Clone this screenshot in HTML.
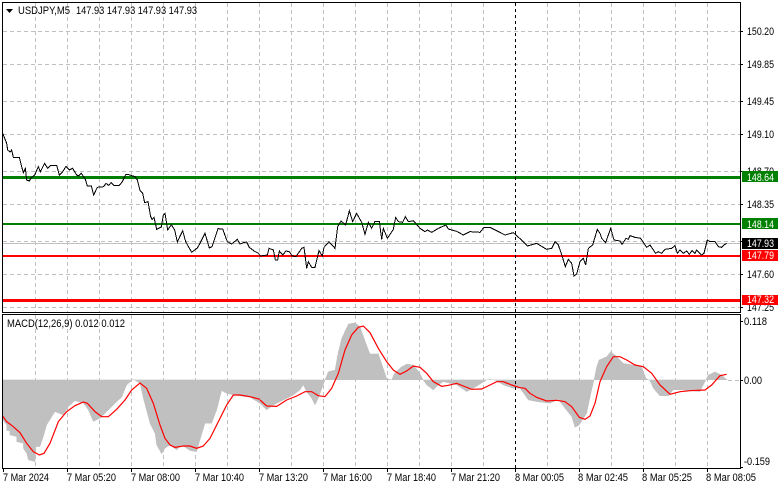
<!DOCTYPE html>
<html>
<head>
<meta charset="utf-8">
<style>
html,body{margin:0;padding:0;background:#fff;width:781px;height:489px;overflow:hidden}
svg{display:block}
text{font-family:"Liberation Sans",sans-serif;font-size:11px;fill:#000}
.g{stroke:#c0c0c0;stroke-width:1;stroke-dasharray:4 3;fill:none}
.f{stroke:#000;stroke-width:1;fill:none}
.p{fill:none;stroke:#000;stroke-width:3;shape-rendering:crispEdges}
.r{fill:none;stroke:#f00;stroke-width:3.6}
.h{fill:#c0c0c0;stroke:#c0c0c0;stroke-width:1;shape-rendering:crispEdges}
.w{fill:#fff}
</style>
</head>
<body>
<svg width="781" height="489" viewBox="0 0 781 489" xmlns="http://www.w3.org/2000/svg">
<rect width="781" height="489" fill="#fff"/>

<g class="g" shape-rendering="crispEdges">
<path d="M3 31.5H740M3 64.5H740M3 101.5H740M3 134.5H740M3 171.5H740M3 204.5H740M3 241.5H740M3 274.5H740M3 307.5H740"/>
<path d="M35.5 3V312M67.5 3V312M99.5 3V312M131.5 3V312M163.5 3V312M195.5 3V312M227.5 3V312M259.5 3V312M291.5 3V312M323.5 3V312M355.5 3V312M387.5 3V312M419.5 3V312M451.5 3V312M483.5 3V312M547.5 3V312M579.5 3V312M611.5 3V312M643.5 3V312M675.5 3V312M707.5 3V312"/>
<path d="M35.5 315V468M67.5 315V468M99.5 315V468M131.5 315V468M163.5 315V468M195.5 315V468M227.5 315V468M259.5 315V468M291.5 315V468M323.5 315V468M355.5 315V468M387.5 315V468M419.5 315V468M451.5 315V468M483.5 315V468M547.5 315V468M579.5 315V468M611.5 315V468M643.5 315V468M675.5 315V468M707.5 315V468"/>
<path d="M728 380.5H740"/>
</g>

<path d="M3 243.5H740" stroke="#c0c0c0" stroke-width="1" shape-rendering="crispEdges"/>

<!-- level lines -->
<rect x="3" y="176" width="738" height="3" fill="#008000"/>
<rect x="3" y="223" width="738" height="2" fill="#008000"/>
<rect x="3" y="255" width="738" height="2" fill="#f00"/>
<rect x="3" y="299" width="738" height="3" fill="#f00"/>

<!-- price line -->
<g transform="translate(0,130) scale(.33333)">
<polyline class="p" points="8,10 14,25 20,40 23,60 30,66 35,60 40,82 58,82 65,110 70,128 76,115 80,150 88,153 92,145 104,135 115,110 121,125 134,100 143,115 152,106 170,106 178,135 188,125 198,109 208,120 218,115 230,135 236,138 244,130 256,148 262,168 274,168 281,195 292,172 311,170 318,160 326,166 333,158 342,166 358,166 367,155 377,134 386,134 405,140 412,150 420,182 428,190 434,218 444,215 452,260 456,268 462,262 470,298 484,291 490,255 495,250 503,300 514,284 524,300 532,336 548,302 557,335 575,367 592,354 600,340 615,310 628,354 636,350 654,296 668,297 682,335 695,342 712,328 720,342 730,338 740,336 748,352 764,364 776,370 780,378"/>
</g>
<g transform="translate(260,190) scale(.33333)">
<polyline class="p" points="0,198 22,195 27,175 40,180 46,210 53,210 58,183 68,195 78,183 88,185 97,198 108,200 125,175 132,172 140,235 145,215 155,232 165,232 177,182 187,198 192,172 207,155 225,175 233,110 243,93 257,105 268,62 278,95 290,70 305,97 315,133 325,97 335,115 345,94 358,94 365,148 370,115 382,145 400,118 407,82 415,95 428,97 436,80 445,95 460,92 480,115 495,125 502,120 515,127 535,115 558,105 565,117 590,124 610,135 630,125 660,127 672,112 690,112 710,122 735,135 760,128 780,146"/>
</g>
<g transform="translate(520,150) scale(.33333)">
<polyline class="p" points="0,265 15,280 22,288 50,280 80,298 95,295 105,275 115,285 127,320 136,350 145,328 155,340 162,378 170,372 180,335 190,325 197,345 205,295 218,285 232,238 240,250 245,265 257,278 272,235 282,270 300,273 306,283 318,265 325,268 330,257 345,262 362,265 380,292 390,285 407,310 415,305 425,310 435,298 455,295 465,287 472,310 480,300 490,310 500,303 508,313 516,302 525,310 530,300 545,315 552,310 562,270 570,275 585,275 595,290 605,292 612,285 620,280"/>
</g>

<!-- histogram -->
<g transform="translate(0,310) scale(.33333)">
<polygon class="h" points="8,210 8,330 20,345 20,362 30,362 30,375 50,380 50,395 70,400 70,415 80,430 85,450 105,455 108,410 120,410 130,380 140,345 165,305 190,315 205,290 225,272 250,280 265,300 280,335 300,325 320,305 345,280 365,262 380,225 400,208 420,220 430,265 450,340 465,370 470,405 485,432 495,415 510,405 530,420 545,405 570,422 590,425 600,390 615,340 635,340 650,300 665,242 680,250 700,255 750,262 780,280 780,210"/>
<polyline class="r" points="8,318 20,335 40,350 60,368 80,400 100,425 118,435 132,430 150,400 175,335 200,305 225,287 250,276 262,280 285,305 305,320 325,320 350,298 375,270 395,240 420,219 440,235 460,280 480,345 495,385 510,405 525,412 550,408 570,408 590,415 610,408 630,385 650,345 680,285 700,255 720,255 750,260 780,268"/>
</g>
<g transform="translate(260,310) scale(.33333)">
<polygon class="h" points="0,210 0,280 20,300 40,285 60,275 80,265 100,255 120,240 130,225 140,245 155,265 165,285 175,265 195,210 205,185 225,180 235,125 245,85 265,42 285,38 300,50 318,100 330,132 355,132 370,175 380,205 395,210 403,190 425,170 440,162 460,165 480,190 490,210 500,225 520,240 535,225 550,215 590,225 620,245 640,235 680,210 690,208 710,212 730,225 760,235 780,235 780,210"/>
<polyline class="r" points="0,270 20,288 50,289 80,270 110,258 135,245 155,245 175,257 195,260 215,235 235,190 255,120 275,75 295,52 310,48 330,68 355,115 380,155 400,180 420,193 440,183 460,168 480,172 500,190 520,215 545,229 565,226 590,220 610,228 635,238 665,237 690,225 710,215 730,215 755,225 780,233"/>
</g>
<g transform="translate(520,310) scale(.33333)">
<polygon class="h" points="0,210 0,235 25,270 50,275 90,280 115,268 135,295 155,320 165,352 178,345 200,310 215,240 222,210 230,170 237,150 260,140 272,125 285,135 310,160 340,165 365,170 378,205 390,212 400,235 420,258 445,258 460,240 490,240 540,245 555,215 565,195 585,185 605,195 622,210"/>
<polyline class="r" points="0,233 15,235 30,250 50,262 80,273 110,271 135,275 155,290 178,322 195,328 210,318 225,280 240,215 260,170 280,140 300,140 320,150 345,165 370,170 395,190 420,225 450,253 480,245 510,242 555,240 575,225 600,197 620,193"/>
</g>

<!-- period separator -->
<path d="M515.5 3V468" stroke="#000" stroke-width="1" stroke-dasharray="3 3" shape-rendering="crispEdges"/>

<!-- frame -->
<g class="f" shape-rendering="crispEdges">
<path d="M2.5 2.5H740.5V312.5H2.5Z"/>
<path d="M2.5 314.5H740.5V468.5H2.5Z"/>
<path d="M740 31.5H743M740 64.5H743M740 101.5H743M740 134.5H743M740 171.5H743M740 204.5H743M740 241.5H743M740 274.5H743M740 307.5H743M740 321.5H743M740 380.5H743M740 467.5H743"/>
<path d="M3.5 468V472M67.5 468V472M131.5 468V472M195.5 468V472M259.5 468V472M323.5 468V472M387.5 468V472M451.5 468V472M515.5 468V472M579.5 468V472M643.5 468V472M707.5 468V472"/>
</g>

<!-- title -->
<polygon points="6,9 13,9 9.5,13" fill="#000"/>
<text x="18" y="14" textLength="52" lengthAdjust="spacingAndGlyphs">USDJPY,M5</text>
<text x="76" y="14" textLength="121" lengthAdjust="spacingAndGlyphs">147.93 147.93 147.93 147.93</text>
<text x="7" y="327" textLength="118" lengthAdjust="spacingAndGlyphs">MACD(12,26,9) 0.012 0.012</text>

<!-- price axis -->
<g>
<text x="747" y="35" textLength="27" lengthAdjust="spacingAndGlyphs">150.20</text>
<text x="747" y="68" textLength="27" lengthAdjust="spacingAndGlyphs">149.85</text>
<text x="747" y="105" textLength="27" lengthAdjust="spacingAndGlyphs">149.45</text>
<text x="747" y="138" textLength="27" lengthAdjust="spacingAndGlyphs">149.10</text>
<text x="747" y="175" textLength="27" lengthAdjust="spacingAndGlyphs">148.70</text>
<text x="747" y="208" textLength="27" lengthAdjust="spacingAndGlyphs">148.35</text>
<text x="747" y="278" textLength="27" lengthAdjust="spacingAndGlyphs">147.60</text>
<text x="747" y="311" textLength="27" lengthAdjust="spacingAndGlyphs">147.25</text>
</g>
<rect x="742" y="171" width="36" height="11" fill="#008000"/>
<text class="w" x="747" y="181" textLength="27" lengthAdjust="spacingAndGlyphs">148.64</text>
<rect x="742" y="218" width="36" height="11" fill="#008000"/>
<text class="w" x="747" y="228" textLength="27" lengthAdjust="spacingAndGlyphs">148.14</text>
<rect x="742" y="238" width="36" height="11" fill="#000"/>
<text class="w" x="747" y="247" textLength="27" lengthAdjust="spacingAndGlyphs">147.93</text>
<rect x="742" y="250" width="36" height="11" fill="#f00"/>
<text class="w" x="747" y="259" textLength="27" lengthAdjust="spacingAndGlyphs">147.79</text>
<rect x="742" y="295" width="36" height="10" fill="#f00"/>
<text class="w" x="747" y="303" textLength="27" lengthAdjust="spacingAndGlyphs">147.32</text>

<text x="744" y="325" textLength="23" lengthAdjust="spacingAndGlyphs">0.118</text>
<text x="744" y="384" textLength="18" lengthAdjust="spacingAndGlyphs">0.00</text>
<text x="744" y="465" textLength="26" lengthAdjust="spacingAndGlyphs">-0.159</text>

<!-- time axis -->
<g>
<text x="3" y="481" textLength="46" lengthAdjust="spacingAndGlyphs">7 Mar 2024</text>
<text x="67" y="481" textLength="49" lengthAdjust="spacingAndGlyphs">7 Mar 05:20</text>
<text x="131" y="481" textLength="49" lengthAdjust="spacingAndGlyphs">7 Mar 08:00</text>
<text x="195" y="481" textLength="49" lengthAdjust="spacingAndGlyphs">7 Mar 10:40</text>
<text x="259" y="481" textLength="49" lengthAdjust="spacingAndGlyphs">7 Mar 13:20</text>
<text x="323" y="481" textLength="49" lengthAdjust="spacingAndGlyphs">7 Mar 16:00</text>
<text x="387" y="481" textLength="49" lengthAdjust="spacingAndGlyphs">7 Mar 18:40</text>
<text x="451" y="481" textLength="49" lengthAdjust="spacingAndGlyphs">7 Mar 21:20</text>
<text x="515" y="481" textLength="49" lengthAdjust="spacingAndGlyphs">8 Mar 00:05</text>
<text x="578" y="481" textLength="50" lengthAdjust="spacingAndGlyphs">8 Mar 02:45</text>
<text x="642" y="481" textLength="50" lengthAdjust="spacingAndGlyphs">8 Mar 05:25</text>
<text x="706" y="481" textLength="50" lengthAdjust="spacingAndGlyphs">8 Mar 08:05</text>
</g>
</svg>
</body>
</html>
